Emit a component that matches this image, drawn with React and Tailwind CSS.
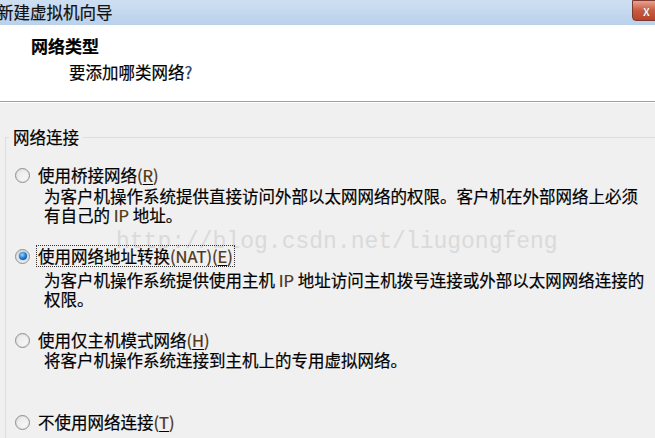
const cjk = { fontFamily: '"Noto Sans CJK SC", "Liberation Sans", sans-serif' }

function Radio({ checked }) {
  return (
    <span className="relative flex h-[15px] w-[15px] shrink-0 items-center justify-center rounded-full border border-[#8e8f8f] bg-gradient-to-br from-[#e6e6e6] to-[#fbfbfb] shadow-[inset_0_0_2px_#c8c8c8]">
      {checked && (
        <span className="h-[8px] w-[8px] rounded-full bg-[radial-gradient(circle_at_40%_35%,#9fd4ff,#1a6fc4_55%,#0e4a8a)] shadow-[0_0_2px_#3a8ee6]" />
      )}
    </span>
  )
}

function Key({ k }) {
  return (
    <span className="text-[#5a3a14]">
      (<span className="underline underline-offset-2">{k}</span>)
    </span>
  )
}

export default function App() {
  return (
    <div className="h-[438px] w-[655px] overflow-hidden bg-[#f0f0f0] text-[16.5px] text-black [-webkit-text-stroke:0.2px_#000]" style={cjk}>
      {/* title bar */}
      <div className="flex h-[25px] items-center justify-between bg-gradient-to-b from-[#cfdff2] to-[#b9d1ea]">
        <span className="-ml-[3px] leading-none text-[#111]">新建虚拟机向导</span>
        <div className="mb-[4px] mr-[-6px] flex h-[21px] w-[29px] items-center justify-center self-start rounded-bl-[4px] border border-[#7a3a30] bg-gradient-to-b from-[#e9a18f] via-[#c75a40] to-[#b9432a] text-[13px] font-bold leading-none text-white">
          x
        </div>
      </div>

      {/* header */}
      <div className="h-[77px] border-b border-[#a0a0a0] bg-white pl-[31px] pt-[11px]">
        <div className="text-[17px] font-bold leading-[20px]">网络类型</div>
        <div className="ml-[38px] mt-[6px] leading-[20px]">
          要添加哪类网络<span className="text-[#3a4a80]">?</span>
        </div>
      </div>
      <div className="h-px bg-white" />

      {/* group */}
      <fieldset className="relative ml-[5px] mt-[24px] h-[340px] border-l border-t border-[#d5dfe5] pl-[9px]">
        <legend className="-ml-[6px] px-[4px] leading-[20px]">网络连接</legend>

        <div className="absolute left-[110px] top-[84px] select-none text-[23px] leading-none text-[#dadada] [-webkit-text-stroke:0]" style={{ fontFamily: '"Liberation Mono", "DejaVu Sans Mono", monospace' }}>
          http://blog.csdn.net/liugongfeng
        </div>

        <div className="relative mt-[18px]">
          <div className="flex h-[20px] items-center gap-[8px]">
            <Radio />
            <span className="leading-[20px]">使用桥接网络<Key k="R" /></span>
          </div>
          <div className="mt-[2px] pl-[29px] leading-[19px]">
            <div>为客户机操作系统提供直接访问外部以太网网络的权限。客户机在外部网络上必须</div>
            <div>有自己的 <span className="text-[#5a3a14]">IP</span> 地址。</div>
          </div>
        </div>

        <div className="relative mt-[20px]">
          <div className="flex h-[22px] items-center gap-[6px]">
            <Radio checked />
            <span className="border border-dotted border-[#333] px-[1px] leading-[20px]">
              使用网络地址转换<span className="text-[#5a3a14]">(NAT)</span><Key k="E" />
            </span>
          </div>
          <div className="mt-[4px] pl-[29px] leading-[19px]">
            <div>为客户机操作系统提供使用主机 <span className="text-[#5a3a14]">IP</span> 地址访问主机拨号连接或外部以太网网络连接的</div>
            <div>权限。</div>
          </div>
        </div>

        <div className="relative mt-[21px]">
          <div className="flex h-[20px] items-center gap-[8px]">
            <Radio />
            <span className="leading-[20px]">使用仅主机模式网络<Key k="H" /></span>
          </div>
          <div className="mt-[1px] pl-[29px] leading-[19px]">将客户机操作系统连接到主机上的专用虚拟网络。</div>
        </div>

        <div className="mt-[42px] flex h-[20px] items-center gap-[8px]">
          <Radio />
          <span className="leading-[20px]">不使用网络连接<Key k="T" /></span>
        </div>
      </fieldset>
    </div>
  )
}
